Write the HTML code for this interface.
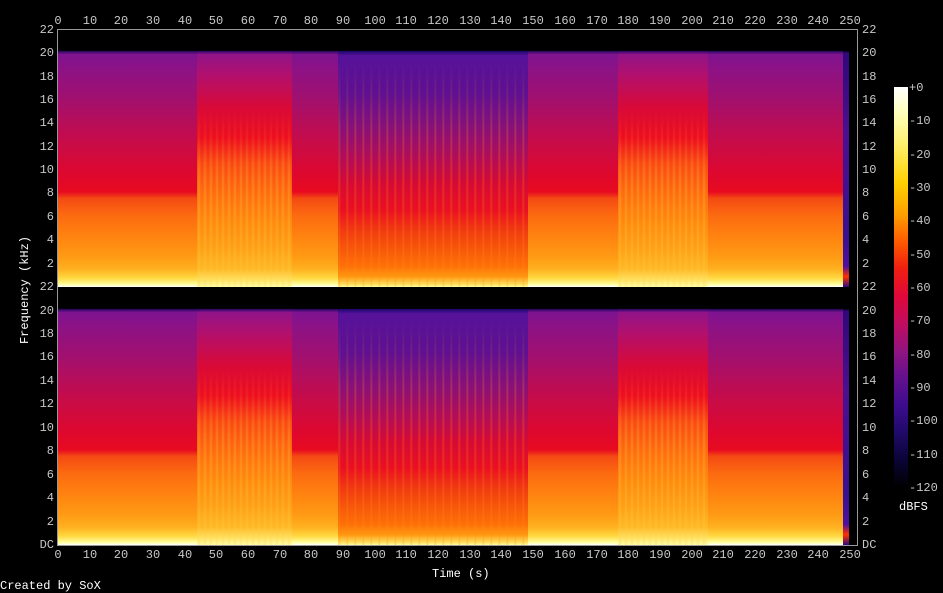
<!DOCTYPE html>
<html><head><meta charset="utf-8"><style>
body{margin:0;background:#000;width:943px;height:593px;overflow:hidden;position:relative;font-family:"Liberation Mono","DejaVu Sans Mono",monospace;font-size:12px;color:#c8c8c8}
.a{position:absolute;line-height:12px;white-space:nowrap}
.tx{width:40px;text-align:center}
.l{width:40px;text-align:right}
.panel{position:absolute;left:58px;width:799px;height:257px;overflow:hidden;background:#000}
.s{position:absolute;top:0;height:257px}
.st{position:absolute;top:30px;height:227px}
.n{background:linear-gradient(to bottom,#000 0%,#000 8%,#2a0860 8.3%,#7e1490 9.5%,#8a1288 14%,#a2106e 27%,#c40c4c 42%,#dc0830 55%,#e80a20 63%,#f44a14 65.5%,#fc6a10 72%,#ff8210 80%,#ff9a14 88%,#ffb020 93%,#ffd840 96.5%,#ffffa0 99%,#fff 100%)}
.ld{background:linear-gradient(to bottom,#000 0%,#000 8%,#30086a 8.3%,#901488 9.5%,#b01070 17%,#d80a38 30%,#ee0e20 42%,#fa4a14 52%,#ff7010 65%,#ff8a10 75%,#ffa018 85%,#ffb828 93%,#ffe060 97%,#ffffb0 100%)}
.q{background:linear-gradient(to bottom,#000 0%,#000 8%,#200870 8.3%,#56129a 10%,#601092 25%,#88107a 38%,#b40c58 50%,#d80a34 60%,#ea1022 70%,#f23a12 78%,#f85a0a 86%,#ff7008 92%,#ff9810 96%,#ffe060 99%,#ffffa0 100%)}
.sl{background:repeating-linear-gradient(to right,rgba(255,210,60,0) 0,rgba(255,210,60,.3) 2px,rgba(255,210,60,0) 4px,rgba(255,210,60,0) 6px);-webkit-mask-image:linear-gradient(to bottom,transparent 0%,#000 40%,#000 100%);mask-image:linear-gradient(to bottom,transparent 0%,#000 40%,#000 100%)}
.sq{background:repeating-linear-gradient(to right,rgba(255,150,20,0) 0,rgba(255,150,20,.3) 1px,rgba(255,150,20,0) 3px,rgba(255,150,20,0) 8px);-webkit-mask-image:linear-gradient(to bottom,transparent 0%,#000 30%,#000 100%);mask-image:linear-gradient(to bottom,transparent 0%,#000 30%,#000 100%)}
.e{background:linear-gradient(to bottom,#000 0%,#000 8%,#30087a 9%,#4a1090 40%,#381090 80%,#5010a0 92%,#ff3000 96%,#300880 100%)}
.ax{position:absolute;background:#999}
</style></head><body>

<div class="ax" style="left:57px;top:29px;width:1px;height:517px"></div>
<div class="ax" style="left:857px;top:29px;width:1px;height:517px"></div>
<div class="ax" style="left:57px;top:29px;width:801px;height:1px"></div>
<div class="ax" style="left:57px;top:545px;width:801px;height:1px"></div>

<div class="panel" style="top:30px">
<div class="s n" style="left:0;width:139px"></div>
<div class="s ld" style="left:139px;width:95px"></div>
<div class="s n" style="left:234px;width:46px"></div>
<div class="s q" style="left:280px;width:190px"></div>
<div class="s n" style="left:470px;width:90px"></div>
<div class="s ld" style="left:560px;width:90px"></div>
<div class="s n" style="left:650px;width:135px"></div>
<div class="s e" style="left:785px;width:6px"></div>
<div class="st sl" style="left:139px;width:95px;top:80px;height:177px"></div>
<div class="st sl" style="left:560px;width:90px;top:80px;height:177px"></div>
<div class="st sq" style="left:280px;width:190px"></div>
</div>
<div class="panel" style="top:288px">
<div class="s n" style="left:0;width:139px"></div>
<div class="s ld" style="left:139px;width:95px"></div>
<div class="s n" style="left:234px;width:46px"></div>
<div class="s q" style="left:280px;width:190px"></div>
<div class="s n" style="left:470px;width:90px"></div>
<div class="s ld" style="left:560px;width:90px"></div>
<div class="s n" style="left:650px;width:135px"></div>
<div class="s e" style="left:785px;width:6px"></div>
<div class="st sl" style="left:139px;width:95px;top:80px;height:177px"></div>
<div class="st sl" style="left:560px;width:90px;top:80px;height:177px"></div>
<div class="st sq" style="left:280px;width:190px"></div>
</div>

<div class="a tx" style="top:15px;left:38px">0</div>
<div class="a tx" style="top:15px;left:70px">10</div>
<div class="a tx" style="top:15px;left:101px">20</div>
<div class="a tx" style="top:15px;left:133px">30</div>
<div class="a tx" style="top:15px;left:165px">40</div>
<div class="a tx" style="top:15px;left:196px">50</div>
<div class="a tx" style="top:15px;left:228px">60</div>
<div class="a tx" style="top:15px;left:260px">70</div>
<div class="a tx" style="top:15px;left:291px">80</div>
<div class="a tx" style="top:15px;left:323px">90</div>
<div class="a tx" style="top:15px;left:355px">100</div>
<div class="a tx" style="top:15px;left:386px">110</div>
<div class="a tx" style="top:15px;left:418px">120</div>
<div class="a tx" style="top:15px;left:450px">130</div>
<div class="a tx" style="top:15px;left:481px">140</div>
<div class="a tx" style="top:15px;left:513px">150</div>
<div class="a tx" style="top:15px;left:545px">160</div>
<div class="a tx" style="top:15px;left:577px">170</div>
<div class="a tx" style="top:15px;left:608px">180</div>
<div class="a tx" style="top:15px;left:640px">190</div>
<div class="a tx" style="top:15px;left:672px">200</div>
<div class="a tx" style="top:15px;left:703px">210</div>
<div class="a tx" style="top:15px;left:735px">220</div>
<div class="a tx" style="top:15px;left:767px">230</div>
<div class="a tx" style="top:15px;left:798px">240</div>
<div class="a tx" style="top:15px;left:830px">250</div>

<div class="a tx" style="top:549px;left:38px">0</div>
<div class="a tx" style="top:549px;left:70px">10</div>
<div class="a tx" style="top:549px;left:101px">20</div>
<div class="a tx" style="top:549px;left:133px">30</div>
<div class="a tx" style="top:549px;left:165px">40</div>
<div class="a tx" style="top:549px;left:196px">50</div>
<div class="a tx" style="top:549px;left:228px">60</div>
<div class="a tx" style="top:549px;left:260px">70</div>
<div class="a tx" style="top:549px;left:291px">80</div>
<div class="a tx" style="top:549px;left:323px">90</div>
<div class="a tx" style="top:549px;left:355px">100</div>
<div class="a tx" style="top:549px;left:386px">110</div>
<div class="a tx" style="top:549px;left:418px">120</div>
<div class="a tx" style="top:549px;left:450px">130</div>
<div class="a tx" style="top:549px;left:481px">140</div>
<div class="a tx" style="top:549px;left:513px">150</div>
<div class="a tx" style="top:549px;left:545px">160</div>
<div class="a tx" style="top:549px;left:577px">170</div>
<div class="a tx" style="top:549px;left:608px">180</div>
<div class="a tx" style="top:549px;left:640px">190</div>
<div class="a tx" style="top:549px;left:672px">200</div>
<div class="a tx" style="top:549px;left:703px">210</div>
<div class="a tx" style="top:549px;left:735px">220</div>
<div class="a tx" style="top:549px;left:767px">230</div>
<div class="a tx" style="top:549px;left:798px">240</div>
<div class="a tx" style="top:549px;left:830px">250</div>

<div class="a l" style="left:14px;top:24px">22</div>
<div class="a l" style="left:14px;top:47px">20</div>
<div class="a l" style="left:14px;top:71px">18</div>
<div class="a l" style="left:14px;top:94px">16</div>
<div class="a l" style="left:14px;top:117px">14</div>
<div class="a l" style="left:14px;top:141px">12</div>
<div class="a l" style="left:14px;top:164px">10</div>
<div class="a l" style="left:14px;top:187px">8</div>
<div class="a l" style="left:14px;top:211px">6</div>
<div class="a l" style="left:14px;top:234px">4</div>
<div class="a l" style="left:14px;top:258px">2</div>
<div class="a l" style="left:14px;top:281px">22</div>
<div class="a l" style="left:14px;top:305px">20</div>
<div class="a l" style="left:14px;top:328px">18</div>
<div class="a l" style="left:14px;top:351px">16</div>
<div class="a l" style="left:14px;top:375px">14</div>
<div class="a l" style="left:14px;top:398px">12</div>
<div class="a l" style="left:14px;top:422px">10</div>
<div class="a l" style="left:14px;top:445px">8</div>
<div class="a l" style="left:14px;top:469px">6</div>
<div class="a l" style="left:14px;top:492px">4</div>
<div class="a l" style="left:14px;top:516px">2</div>
<div class="a l" style="left:14px;top:539px">DC</div>

<div class="a" style="left:862px;top:24px">22</div>
<div class="a" style="left:862px;top:47px">20</div>
<div class="a" style="left:862px;top:71px">18</div>
<div class="a" style="left:862px;top:94px">16</div>
<div class="a" style="left:862px;top:117px">14</div>
<div class="a" style="left:862px;top:141px">12</div>
<div class="a" style="left:862px;top:164px">10</div>
<div class="a" style="left:862px;top:187px">8</div>
<div class="a" style="left:862px;top:211px">6</div>
<div class="a" style="left:862px;top:234px">4</div>
<div class="a" style="left:862px;top:258px">2</div>
<div class="a" style="left:862px;top:281px">22</div>
<div class="a" style="left:862px;top:305px">20</div>
<div class="a" style="left:862px;top:328px">18</div>
<div class="a" style="left:862px;top:351px">16</div>
<div class="a" style="left:862px;top:375px">14</div>
<div class="a" style="left:862px;top:398px">12</div>
<div class="a" style="left:862px;top:422px">10</div>
<div class="a" style="left:862px;top:445px">8</div>
<div class="a" style="left:862px;top:469px">6</div>
<div class="a" style="left:862px;top:492px">4</div>
<div class="a" style="left:862px;top:516px">2</div>
<div class="a" style="left:862px;top:539px">DC</div>

<div class="a" style="left:-29px;top:284px;transform:rotate(-90deg);color:#fff">Frequency (kHz)</div>
<div class="a" style="left:432px;top:568px;color:#fff">Time (s)</div>
<div class="a" style="left:0;top:580px;color:#fff">Created by SoX</div>

<div style="position:absolute;left:894px;top:87px;width:14px;height:401px;background:linear-gradient(to bottom,#fff 0%,#ffffc0 6%,#fff070 14%,#ffd000 24%,#ff9c00 32%,#ff6000 38%,#f02010 45%,#e00838 52%,#c00c60 59%,#901480 66%,#601090 73%,#3a0c8c 80%,#200a6a 86%,#0a0436 93%,#000 100%)"></div>
<div class="a" style="left:909px;top:82px">+0</div>
<div class="a" style="left:909px;top:115px">-10</div>
<div class="a" style="left:909px;top:149px">-20</div>
<div class="a" style="left:909px;top:182px">-30</div>
<div class="a" style="left:909px;top:215px">-40</div>
<div class="a" style="left:909px;top:249px">-50</div>
<div class="a" style="left:909px;top:282px">-60</div>
<div class="a" style="left:909px;top:315px">-70</div>
<div class="a" style="left:909px;top:349px">-80</div>
<div class="a" style="left:909px;top:382px">-90</div>
<div class="a" style="left:909px;top:415px">-100</div>
<div class="a" style="left:909px;top:449px">-110</div>
<div class="a" style="left:909px;top:482px">-120</div>
<div class="a" style="left:899px;top:501px;color:#fff">dBFS</div>
</body></html>
